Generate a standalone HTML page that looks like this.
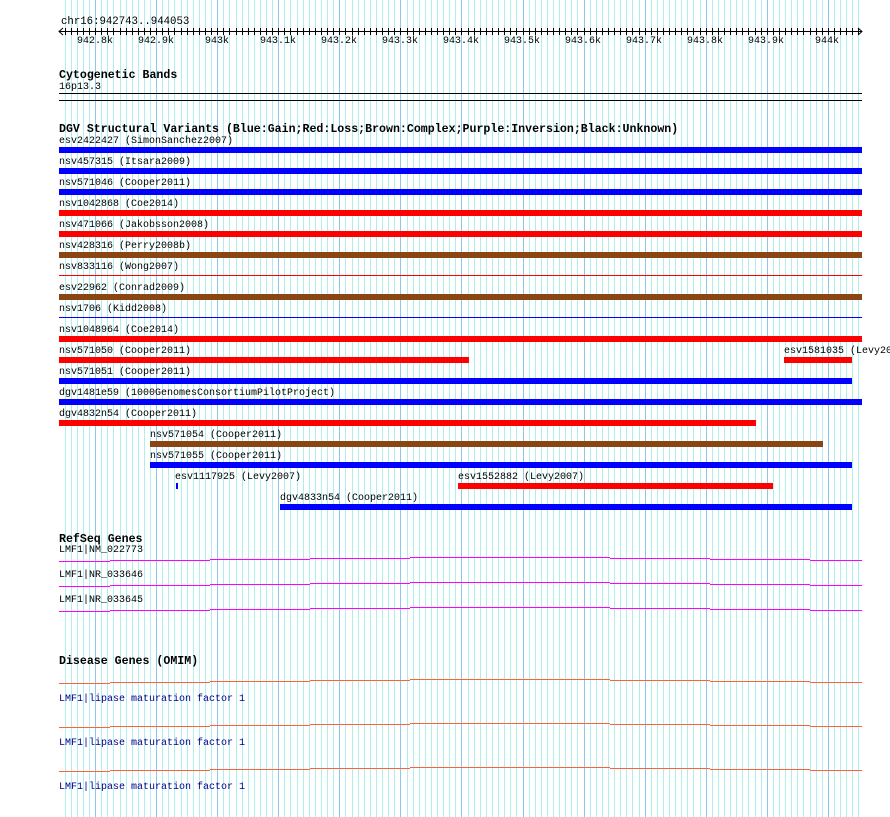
<!DOCTYPE html>
<html><head><meta charset="utf-8">
<style>
html,body{margin:0;padding:0;background:#fff;}
body{width:890px;height:817px;position:relative;overflow:hidden;font-family:"Liberation Mono",monospace;font-size:10px;color:#000;}
.t{position:absolute;white-space:pre;line-height:12px;margin-top:2px;}
.h{position:absolute;white-space:pre;font-weight:bold;font-size:11.6px;line-height:13px;margin-top:2px;}
.b{position:absolute;height:6px;}
.bl{background:#0000ff}.rd{background:#ff0000}.br{background:#8b4513}
.n{color:#00008b}
svg{position:absolute;left:0;top:0;}
</style></head><body>
<svg id="g" width="890" height="817"></svg>
<script>
(function(){
var s='',sc=0.6106,x0=95.1;
function X(bp){return x0+(bp-942800)*sc;}
for(var bp=942750;bp<=944050;bp+=10){
 var x=Math.round(X(bp))+0.5;
 var dark=(bp%100===0);
 s+='<line x1="'+x+'" y1="0" x2="'+x+'" y2="817" stroke="'+(dark?'#8cc8ec':'#aeeeee')+'" stroke-width="1"/>';
}
s+='<line x1="59" y1="31.5" x2="862" y2="31.5" stroke="#000"/>';
s+='<polyline points="63,28 59,31.5 63,35" fill="none" stroke="#000"/>';
s+='<polyline points="858,28 862,31.5 858,35" fill="none" stroke="#000"/>';
for(var bp=942750;bp<=944050;bp+=10){var x=Math.round(X(bp))+0.5;s+='<line x1="'+x+'" y1="28" x2="'+x+'" y2="35" stroke="#000"/>';}
s+='<line x1="59" y1="93.5" x2="862" y2="93.5" stroke="#000"/>';
s+='<line x1="59" y1="100.5" x2="862" y2="100.5" stroke="#000"/>';
s+='<line x1="59" y1="275.5" x2="862" y2="275.5" stroke="#ff0000"/>';
s+='<line x1="59" y1="317.5" x2="862" y2="317.5" stroke="#0000ff"/>';
function gl(y,c){var st=[[59,110,0],[110,210,-1],[210,310,-2],[310,410,-3],[410,510,-4],[510,610,-4],[610,710,-3],[710,810,-2],[810,862,-1]];
 for(var i=0;i<st.length;i++){var yy=y+st[i][2]+0.5;s+='<line x1="'+st[i][0]+'" y1="'+yy+'" x2="'+st[i][1]+'" y2="'+yy+'" stroke="'+c+'"/>';}}
gl(561,'#ff00ff');gl(586,'#ff00ff');gl(611,'#ff00ff');
gl(683,'#ff6040');gl(727,'#ff6040');gl(771,'#ff6040');
document.getElementById('g').innerHTML=s;
})();
</script>
<div class="t" style="left:61px;top:14px;font-size:10.7px">chr16:942743..944053</div>
<div class="t" style="left:77px;top:34px">942.8k</div>
<div class="t" style="left:138px;top:34px">942.9k</div>
<div class="t" style="left:205px;top:34px">943k</div>
<div class="t" style="left:260px;top:34px">943.1k</div>
<div class="t" style="left:321px;top:34px">943.2k</div>
<div class="t" style="left:382px;top:34px">943.3k</div>
<div class="t" style="left:443px;top:34px">943.4k</div>
<div class="t" style="left:504px;top:34px">943.5k</div>
<div class="t" style="left:565px;top:34px">943.6k</div>
<div class="t" style="left:626px;top:34px">943.7k</div>
<div class="t" style="left:687px;top:34px">943.8k</div>
<div class="t" style="left:748px;top:34px">943.9k</div>
<div class="t" style="left:815px;top:34px">944k</div>

<div class="h" style="left:59px;top:67px">Cytogenetic Bands</div>
<div class="t" style="left:59px;top:80px">16p13.3</div>

<div class="h" style="left:59px;top:121px">DGV Structural Variants (Blue:Gain;Red:Loss;Brown:Complex;Purple:Inversion;Black:Unknown)</div>

<div class="t" style="left:59px;top:134px">esv2422427 (SimonSanchez2007)</div><div class="b bl" style="left:59px;width:803px;top:147px"></div>
<div class="t" style="left:59px;top:155px">nsv457315 (Itsara2009)</div><div class="b bl" style="left:59px;width:803px;top:168px"></div>
<div class="t" style="left:59px;top:176px">nsv571046 (Cooper2011)</div><div class="b bl" style="left:59px;width:803px;top:189px"></div>
<div class="t" style="left:59px;top:197px">nsv1042868 (Coe2014)</div><div class="b rd" style="left:59px;width:803px;top:210px"></div>
<div class="t" style="left:59px;top:218px">nsv471066 (Jakobsson2008)</div><div class="b rd" style="left:59px;width:803px;top:231px"></div>
<div class="t" style="left:59px;top:239px">nsv428316 (Perry2008b)</div><div class="b br" style="left:59px;width:803px;top:252px"></div>
<div class="t" style="left:59px;top:260px">nsv833116 (Wong2007)</div>
<div class="t" style="left:59px;top:281px">esv22962 (Conrad2009)</div><div class="b br" style="left:59px;width:803px;top:294px"></div>
<div class="t" style="left:59px;top:302px">nsv1706 (Kidd2008)</div>
<div class="t" style="left:59px;top:323px">nsv1048964 (Coe2014)</div><div class="b rd" style="left:59px;width:803px;top:336px"></div>
<div class="t" style="left:59px;top:344px">nsv571050 (Cooper2011)</div><div class="b rd" style="left:59px;width:410px;top:357px"></div>
<div class="t" style="left:784px;top:344px">esv1581035 (Levy2007)</div><div class="b rd" style="left:784px;width:68px;top:357px"></div>
<div class="t" style="left:59px;top:365px">nsv571051 (Cooper2011)</div><div class="b bl" style="left:59px;width:793px;top:378px"></div>
<div class="t" style="left:59px;top:386px">dgv1481e59 (1000GenomesConsortiumPilotProject)</div><div class="b bl" style="left:59px;width:803px;top:399px"></div>
<div class="t" style="left:59px;top:407px">dgv4832n54 (Cooper2011)</div><div class="b rd" style="left:59px;width:697px;top:420px"></div>
<div class="t" style="left:150px;top:428px">nsv571054 (Cooper2011)</div><div class="b br" style="left:150px;width:673px;top:441px"></div>
<div class="t" style="left:150px;top:449px">nsv571055 (Cooper2011)</div><div class="b bl" style="left:150px;width:702px;top:462px"></div>
<div class="t" style="left:175px;top:470px">esv1117925 (Levy2007)</div><div class="b bl" style="left:176px;width:2px;top:483px"></div>
<div class="t" style="left:458px;top:470px">esv1552882 (Levy2007)</div><div class="b rd" style="left:458px;width:315px;top:483px"></div>
<div class="t" style="left:280px;top:491px">dgv4833n54 (Cooper2011)</div><div class="b bl" style="left:280px;width:572px;top:504px"></div>

<div class="h" style="left:59px;top:531px">RefSeq Genes</div>
<div class="t" style="left:59px;top:543px">LMF1|NM_022773</div>
<div class="t" style="left:59px;top:568px">LMF1|NR_033646</div>
<div class="t" style="left:59px;top:593px">LMF1|NR_033645</div>

<div class="h" style="left:59px;top:653px">Disease Genes (OMIM)</div>
<div class="t n" style="left:59px;top:692px">LMF1|lipase maturation factor 1</div>
<div class="t n" style="left:59px;top:736px">LMF1|lipase maturation factor 1</div>
<div class="t n" style="left:59px;top:780px">LMF1|lipase maturation factor 1</div>
</body></html>
